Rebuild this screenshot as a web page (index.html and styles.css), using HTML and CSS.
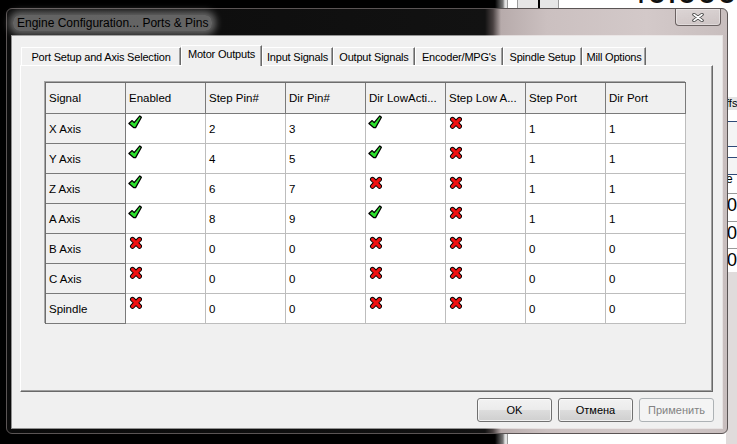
FILE: index.html
```html
<!DOCTYPE html>
<html>
<head>
<meta charset="utf-8">
<title>Engine Configuration</title>
<link rel="stylesheet" href="styles.css">
</head>
<body>
<svg class="defs" width="0" height="0">
  <symbol id="ok" viewBox="0 0 14 14">
    <path d="M0.9 8.6 L4.2 5.6 L6.2 7.6 L11.8 0.9 L13.4 2.2 L7.6 12.6 L5.6 12.6 Z" fill="#2ee22e" stroke="#000" stroke-width="1.3" stroke-linejoin="round"/>
  </symbol>
  <symbol id="no" viewBox="0 0 14 14">
    <path d="M4.5 4.3 L11.5 11.3 M11.5 4.3 L4.5 11.3" stroke="#000" stroke-width="5" stroke-linecap="round" fill="none"/>
    <path d="M4.5 4.3 L11.5 11.3 M11.5 4.3 L4.5 11.3" stroke="#f01212" stroke-width="3.1" stroke-linecap="round" fill="none"/>
  </symbol>
</svg>
<div class="desktop">
  <div class="bgapp">
    <div class="bg-tool"><span class="bg-bar"></span></div>
    <div class="bg-dro">-40.0000</div>
    <div class="bg-ffs">ffs</div>
    <div class="bg-box b1"></div>
    <div class="bg-box b2"></div>
    <div class="bg-e">e</div>
    <div class="bg-zero z1">0</div>
    <div class="bg-zero z2">0</div>
    <div class="bg-zero z3">0</div>
    <div class="bg-lower"></div>
  </div>

  <div class="window">
    <div class="titlebar">
      <span class="title">Engine Configuration... Ports &amp; Pins</span>
      <div class="close">
        <svg width="12" height="9" viewBox="0 0 12 9"><path d="M2 1.5 L10 7.5 M10 1.5 L2 7.5" stroke="#3a3a3a" stroke-width="3.4" stroke-linecap="round"/><path d="M2 1.5 L10 7.5 M10 1.5 L2 7.5" stroke="#fff" stroke-width="1.7" stroke-linecap="round"/></svg>
      </div>
    </div>
    <div class="client">
      <div class="tabs">
        <div class="tab w1">Port Setup and Axis Selection</div>
        <div class="tab sel w2">Motor Outputs</div>
        <div class="tab w3">Input Signals</div>
        <div class="tab w4">Output Signals</div>
        <div class="tab w5">Encoder/MPG's</div>
        <div class="tab w6">Spindle Setup</div>
        <div class="tab w7">Mill Options</div>
      </div>
      <div class="panel">
        <div class="grid">
          <div class="c hd">Signal</div><div class="c hd">Enabled</div><div class="c hd">Step Pin#</div><div class="c hd">Dir Pin#</div><div class="c hd">Dir LowActi...</div><div class="c hd">Step Low A...</div><div class="c hd">Step Port</div><div class="c hd">Dir Port</div>

          <div class="c rh">X Axis</div><div class="c ic"><svg class="ico"><use href="#ok"/></svg></div><div class="c">2</div><div class="c">3</div><div class="c ic"><svg class="ico"><use href="#ok"/></svg></div><div class="c ic"><svg class="ico"><use href="#no"/></svg></div><div class="c">1</div><div class="c">1</div>

          <div class="c rh">Y Axis</div><div class="c ic"><svg class="ico"><use href="#ok"/></svg></div><div class="c">4</div><div class="c">5</div><div class="c ic"><svg class="ico"><use href="#ok"/></svg></div><div class="c ic"><svg class="ico"><use href="#no"/></svg></div><div class="c">1</div><div class="c">1</div>

          <div class="c rh">Z Axis</div><div class="c ic"><svg class="ico"><use href="#ok"/></svg></div><div class="c">6</div><div class="c">7</div><div class="c ic"><svg class="ico"><use href="#no"/></svg></div><div class="c ic"><svg class="ico"><use href="#no"/></svg></div><div class="c">1</div><div class="c">1</div>

          <div class="c rh">A Axis</div><div class="c ic"><svg class="ico"><use href="#ok"/></svg></div><div class="c">8</div><div class="c">9</div><div class="c ic"><svg class="ico"><use href="#ok"/></svg></div><div class="c ic"><svg class="ico"><use href="#no"/></svg></div><div class="c">1</div><div class="c">1</div>

          <div class="c rh">B Axis</div><div class="c ic"><svg class="ico"><use href="#no"/></svg></div><div class="c">0</div><div class="c">0</div><div class="c ic"><svg class="ico"><use href="#no"/></svg></div><div class="c ic"><svg class="ico"><use href="#no"/></svg></div><div class="c">0</div><div class="c">0</div>

          <div class="c rh">C Axis</div><div class="c ic"><svg class="ico"><use href="#no"/></svg></div><div class="c">0</div><div class="c">0</div><div class="c ic"><svg class="ico"><use href="#no"/></svg></div><div class="c ic"><svg class="ico"><use href="#no"/></svg></div><div class="c">0</div><div class="c">0</div>

          <div class="c rh">Spindle</div><div class="c ic"><svg class="ico"><use href="#no"/></svg></div><div class="c">0</div><div class="c">0</div><div class="c ic"><svg class="ico"><use href="#no"/></svg></div><div class="c ic"><svg class="ico"><use href="#no"/></svg></div><div class="c">0</div><div class="c">0</div>
        </div>
      </div>
      <div class="buttons">
        <div class="btn">OK</div>
        <div class="btn">Отмена</div>
        <div class="btn disabled">Применить</div>
      </div>
    </div>
  </div>
</div>
</body>
</html>
```
FILE: styles.css
```css
html, body {
  margin: 0;
  padding: 0;
}
body {
  width: 737px;
  height: 444px;
  overflow: hidden;
  background: #000;
  font-family: "Liberation Sans", Arial, sans-serif;
  color: #000;
}
.defs {
  position: absolute;
  width: 0;
  height: 0;
  overflow: hidden;
}
.desktop {
  position: relative;
  width: 737px;
  height: 444px;
  overflow: hidden;
}

/* background application peeking at the right */
.bgapp {
  position: absolute;
  left: 495px;
  top: 0;
  right: 0;
  bottom: 0;
  background: linear-gradient(90deg, #000 0, #7a7a7a 8px, #e2e2e2 10px, #e2e2e2 12px, #9a9a9a 12px, #9a9a9a 13px, #fff 13px);
  overflow: hidden;
}
.bg-tool {
  position: absolute;
  left: 22px;
  top: -4px;
  width: 40px;
  height: 13px;
  border: 1px solid #9c9c9c;
  background: #e6e6e6;
}
.bg-bar {
  position: absolute;
  left: 20px;
  top: 0;
  width: 2px;
  height: 14px;
  background: #000;
}
.bg-dro {
  position: absolute;
  left: 120px;
  top: -27px;
  font-size: 36px;
  line-height: 36px;
  white-space: nowrap;
  color: #111;
}
.bg-ffs {
  position: absolute;
  left: 231px;
  top: 97px;
  width: 20px;
  height: 13px;
  background: #e4e4e4;
  font-size: 11px;
  line-height: 13px;
}
.bg-box {
  position: absolute;
  left: 232px;
  width: 20px;
  border: 1px solid #2f4a78;
  background: #f4f4f4;
}
.bg-box.b1 { top: 121px; height: 24px; }
.bg-box.b2 { top: 157px; height: 16px; }
.bg-e {
  position: absolute;
  left: 231px;
  top: 173px;
  font-size: 12px;
  line-height: 12px;
}
.bg-zero {
  position: absolute;
  left: 231px;
  width: 20px;
  height: 22px;
  border-top: 1px solid #9a9a9a;
  border-left: 1px solid #9a9a9a;
  font-size: 18px;
  line-height: 22px;
}
.bg-zero.z1 { top: 193px; }
.bg-zero.z2 { top: 221px; }
.bg-zero.z3 { top: 248px; }
.bg-lower {
  position: absolute;
  left: 231px;
  top: 272px;
  width: 20px;
  bottom: 0;
  background: #e0dbdb;
}

/* dialog window */
.window {
  position: absolute;
  left: 6px;
  top: 8px;
  width: 722px;
  height: 426px;
  box-sizing: border-box;
  border: 1px solid #5a5454;
  border-radius: 6px;
  background: linear-gradient(90deg, #0b0b0b 0, #121212 478px, #4a4242 486px, #b7abab 494px, #cbc0c0 540px, #d3c9c9 640px, #c8bebe 100%);
  display: flex;
  flex-direction: column;
}
.titlebar {
  height: 27px;
  flex: none;
  display: flex;
  align-items: center;
  padding-left: 10px;
}
.title {
  font-size: 12px;
  color: #000;
  padding: 1px 4px;
  margin-left: -4px;
  border-radius: 7px;
  background: rgba(255, 255, 255, 0.36);
  box-shadow: 0 0 7px 4px rgba(255, 255, 255, 0.36);
  white-space: nowrap;
}
.close {
  margin-left: auto;
  margin-right: 6px;
  align-self: flex-start;
  width: 46px;
  height: 17px;
  box-sizing: border-box;
  border: 1px solid rgba(70, 60, 60, 0.75);
  border-top: none;
  border-radius: 0 0 4px 4px;
  background: linear-gradient(rgba(255, 255, 255, 0.28), rgba(255, 255, 255, 0.08));
  box-shadow: inset 0 0 0 1px rgba(255, 255, 255, 0.35);
  display: flex;
  align-items: center;
  justify-content: center;
}
.close svg { display: block; }

.client {
  flex: 1;
  margin: 0 5px 5px 5px;
  background: #f0f0f0;
  box-shadow: 0 0 0 1px rgba(255, 255, 255, 0.55);
  display: flex;
  flex-direction: column;
}

/* tabs */
.tabs {
  height: 29px;
  box-sizing: border-box;
  display: flex;
  align-items: flex-end;
  padding-left: 9px;
  position: relative;
  z-index: 1;
}
.tab {
  height: 18px;
  box-sizing: border-box;
  border-top: 1px solid #fff;
  border-left: 1px solid #fff;
  border-right: 1px solid #696969;
  box-shadow: inset -1px 0 0 #a0a0a0;
  background: #f0f0f0;
  font-size: 11px;
  letter-spacing: -0.2px;
  white-space: nowrap;
  display: flex;
  align-items: center;
  justify-content: center;
}
.tab.sel {
  height: 21px;
  margin-bottom: -1px;
  align-items: flex-start;
  padding-top: 2px;
}
.w1 { width: 160px; }
.w2 { width: 81px; }
.w3 { width: 71px; }
.w4 { width: 82px; }
.w5 { width: 88px; }
.w6 { width: 79px; }
.w7 { width: 64px; }

/* tab page */
.panel {
  margin-left: 8px;
  width: 693px;
  height: 327px;
  box-sizing: border-box;
  border: 1px solid;
  border-color: #fff #696969 #696969 #fff;
  box-shadow: inset -1px -1px 0 #a0a0a0;
  padding: 16px 0 0 24px;
}

/* data grid */
.grid {
  display: grid;
  grid-template-columns: repeat(8, 80px);
  grid-template-rows: 31px;
  grid-auto-rows: 30px;
  width: 640px;
  border-top: 1px solid #6d6d6d;
  border-left: 1px solid #6d6d6d;
  box-shadow: -1px -1px 0 #a8a8a8;
  font-size: 11.5px;
}
.c {
  box-sizing: border-box;
  background: #fff;
  border-right: 1px solid #bdbdbd;
  border-bottom: 1px solid #bdbdbd;
  padding-left: 3px;
  display: flex;
  align-items: center;
  white-space: nowrap;
  overflow: hidden;
}
.c.hd {
  background: #f0f0f0;
  border-right-color: #7a7a7a;
  border-bottom-color: #7a7a7a;
}
.c.rh {
  background: #f0f0f0;
  border-right-color: #7a7a7a;
  border-bottom-color: #7a7a7a;
}
.c.ic {
  align-items: flex-start;
  padding: 1px 0 0 2px;
}
.ico {
  width: 14px;
  height: 14px;
  display: block;
}

/* buttons */
.buttons {
  display: flex;
  justify-content: flex-end;
  gap: 6px;
  padding-right: 8px;
  margin-top: 6px;
}
.btn {
  width: 75px;
  height: 24px;
  box-sizing: border-box;
  border: 1px solid #707070;
  border-radius: 3px;
  background: linear-gradient(#f2f2f2 0%, #ebebeb 50%, #dddddd 50%, #cfcfcf 100%);
  box-shadow: inset 0 0 0 1px rgba(255, 255, 255, 0.7);
  font-size: 11px;
  display: flex;
  align-items: center;
  justify-content: center;
}
.btn.disabled {
  border-color: #adb2b5;
  background: #f4f4f4;
  box-shadow: none;
  color: #838383;
}
```
